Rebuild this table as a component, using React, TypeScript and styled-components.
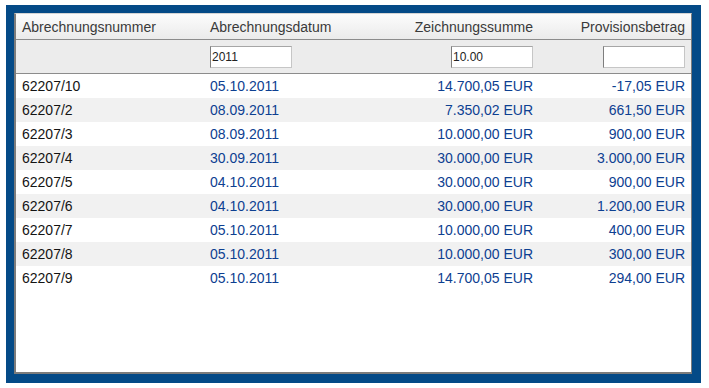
import React from "react";
import styled, { createGlobalStyle } from "styled-components";

const GlobalStyle = createGlobalStyle`
  body {
    margin: 0;
    background: #ffffff;
    font-family: "Liberation Sans", Arial, sans-serif;
  }
`;

const Frame = styled.div`
  margin: 5px 0 0 6px;
  width: 695px;
  height: 378px;
  box-sizing: border-box;
  padding: 8px 9px 9px 8px;
  background: #044a87;
`;

const Panel = styled.div`
  height: 100%;
  box-sizing: border-box;
  background: #ffffff;
  border-top: 1px solid #d4d4d4;
  border-left: 2px solid #7c7c7c;
  border-right: 1px solid #7c7c7c;
  border-bottom: 2px solid #7c7c7c;
`;

const Row = styled.div<{ $striped?: boolean }>`
  display: grid;
  grid-template-columns: 188px 96px 239px 152px;
  height: 24px;
  align-items: center;
  background: ${(p) => (p.$striped ? "#f1f1f1" : "#ffffff")};
`;

const HeaderRow = styled(Row)`
  height: 25px;
  background: linear-gradient(#fcfcfc, #ebebeb);
  border-bottom: 1px solid #8c8c8c;
`;

const FilterRow = styled(Row)`
  height: 33px;
  background: #ececec;
  border-bottom: 1px solid #8c8c8c;
`;

const Cell = styled.div<{ $right?: boolean; $blue?: boolean }>`
  padding: 0 6px;
  font-size: 14px;
  white-space: nowrap;
  display: flex;
  justify-content: ${(p) => (p.$right ? "flex-end" : "flex-start")};
  color: ${(p) => (p.$blue ? "#0d4091" : "#141414")};
`;

const HeadCell = styled(Cell)`
  color: #3a3a3a;
`;

const FilterInput = styled.input`
  width: 82px;
  height: 22px;
  box-sizing: border-box;
  margin: 0;
  padding: 0 1px;
  font-family: "Liberation Sans", Arial, sans-serif;
  font-size: 12px;
  color: #222222;
  background: #ffffff;
  border: 1px solid #c6c6c6;
  border-top-color: #a6a6a6;
  border-left-color: #7e7e7e;
  outline: none;
`;

const rows = [
  ["62207/10", "05.10.2011", "14.700,05 EUR", "-17,05 EUR"],
  ["62207/2", "08.09.2011", "7.350,02 EUR", "661,50 EUR"],
  ["62207/3", "08.09.2011", "10.000,00 EUR", "900,00 EUR"],
  ["62207/4", "30.09.2011", "30.000,00 EUR", "3.000,00 EUR"],
  ["62207/5", "04.10.2011", "30.000,00 EUR", "900,00 EUR"],
  ["62207/6", "04.10.2011", "30.000,00 EUR", "1.200,00 EUR"],
  ["62207/7", "05.10.2011", "10.000,00 EUR", "400,00 EUR"],
  ["62207/8", "05.10.2011", "10.000,00 EUR", "300,00 EUR"],
  ["62207/9", "05.10.2011", "14.700,05 EUR", "294,00 EUR"],
];

const App: React.FC = () => {
  return (
    <>
      <GlobalStyle />
      <Frame>
        <Panel>
          <HeaderRow>
            <HeadCell>Abrechnungsnummer</HeadCell>
            <HeadCell>Abrechnungsdatum</HeadCell>
            <HeadCell $right>Zeichnungssumme</HeadCell>
            <HeadCell $right>Provisionsbetrag</HeadCell>
          </HeaderRow>
          <FilterRow>
            <Cell />
            <Cell>
              <FilterInput defaultValue="2011" />
            </Cell>
            <Cell $right>
              <FilterInput defaultValue="10.00" />
            </Cell>
            <Cell $right>
              <FilterInput defaultValue="" />
            </Cell>
          </FilterRow>
          {rows.map((r, i) => (
            <Row key={r[0]} $striped={i % 2 === 1}>
              <Cell>{r[0]}</Cell>
              <Cell $blue>{r[1]}</Cell>
              <Cell $right $blue>{r[2]}</Cell>
              <Cell $right $blue>{r[3]}</Cell>
            </Row>
          ))}
        </Panel>
      </Frame>
    </>
  );
};

export default App;
